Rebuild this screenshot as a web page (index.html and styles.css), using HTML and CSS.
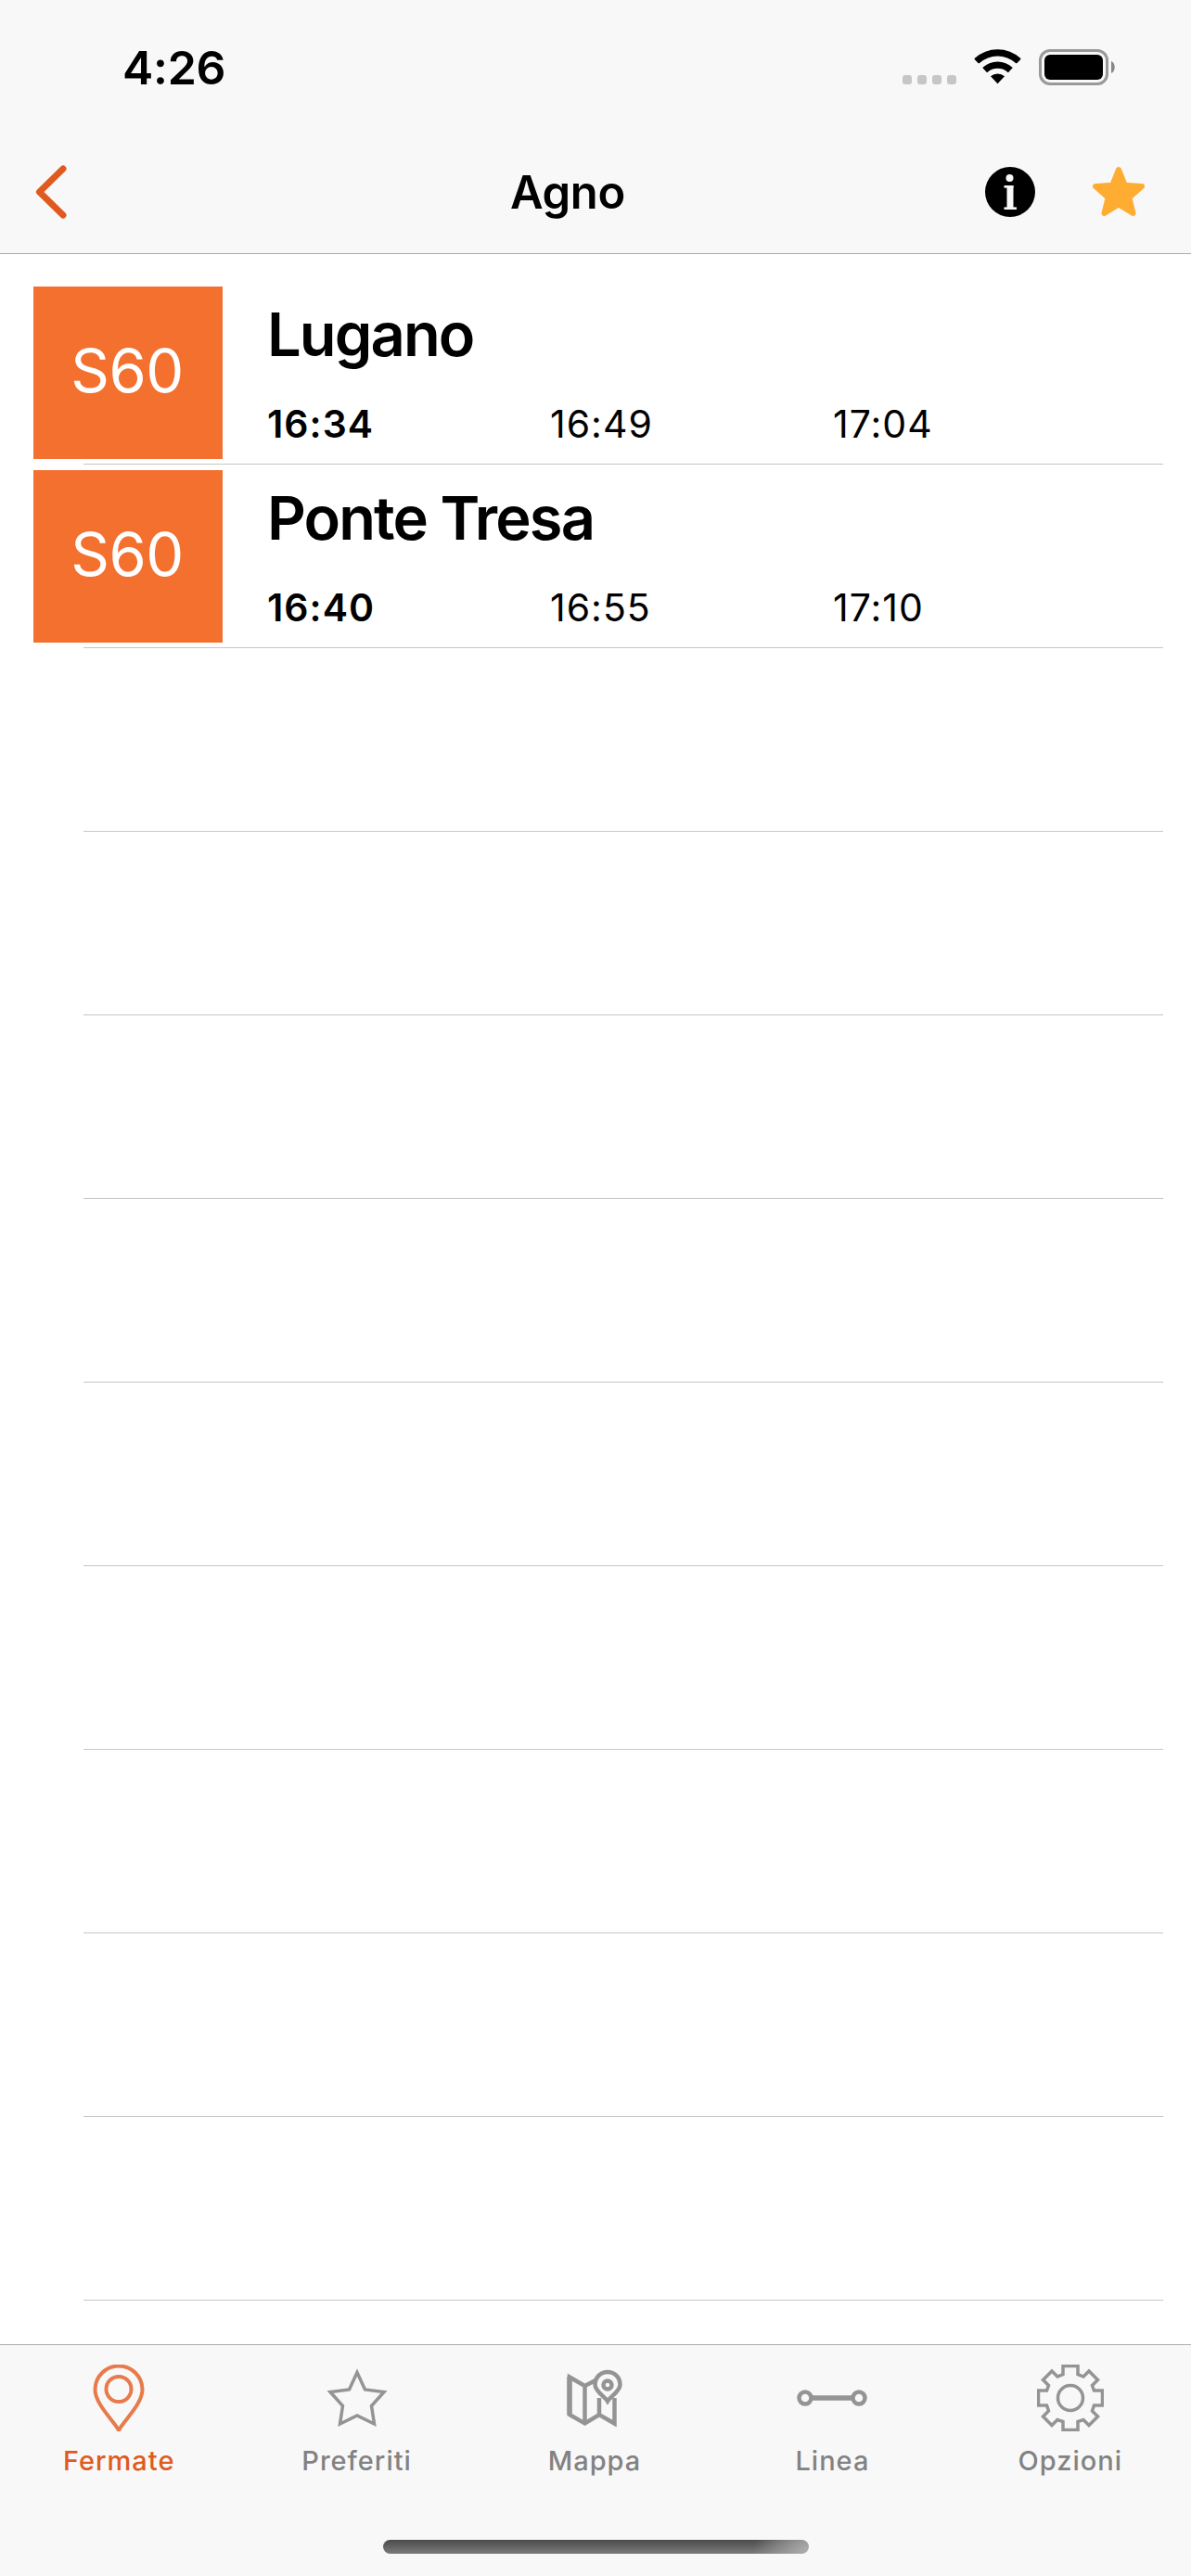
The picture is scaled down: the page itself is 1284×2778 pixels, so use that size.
FILE: index.html
```html
<!DOCTYPE html>
<html lang="it">
  <head>
    <meta charset="UTF-8">
    <meta name="viewport" content="width=device-width, initial-scale=1.0">
    <title>Agno</title>
    <link rel="stylesheet" href="styles.css">
  </head>
  <body>
    <header class="header">
      <div class="status-bar">
        <span class="clock">4:26</span>
        <div class="status-icons">
          <div class="signal"><i></i><i></i><i></i><i></i></div>
          <svg class="wifi" width="52" height="39" viewBox="0 0 52 39">
            <path d="M0.9 11.2 Q0.2 10.500 0.9 9.800 A36.500 36.500 0 0 1 50.100 9.800 Q50.800 10.500 50.100 11.200 L46.500 15 Q45.700 15.700 45 15 A29 29 0 0 0 6 15 Q5.300 15.700 4.500 15 Z" />
            <path d="M9.200 20 A24 24 0 0 1 41.800 20 L36.900 25.200 A17 17 0 0 0 14.100 25.200 Z" />
            <path d="M18 29.200 A11.500 11.500 0 0 1 33 29.200 L25.500 37.300 Z" />
          </svg>
          <svg class="battery" width="83" height="39" viewBox="0 0 83 39">
            <rect x="1.5" y="1.5" width="72" height="36" rx="10.5" fill="none" stroke="#999" stroke-width="3" />
            <rect x="6" y="6" width="63" height="27" rx="6" />
            <path d="M78 13 C83 15 83 24 78 26 Z" fill="#888" />
          </svg>
        </div>
      </div>

      <nav class="nav-bar">
        <svg class="back" width="34" height="58" viewBox="0 0 34 58">
          <path d="M30 4 L4.5 29 L30 54" />
        </svg>
        <h1 class="page-title">Agno</h1>
        <div class="nav-actions">
          <svg width="54" height="54" viewBox="0 0 54 54">
            <circle cx="27" cy="27" r="27" />
            <g fill="#f8f8f8">
              <circle cx="26.5" cy="12" r="4" />
              <rect x="20.5" y="20" width="10" height="2.6" />
              <rect x="23.5" y="20" width="7" height="25" />
              <rect x="20.5" y="43.4" width="13.5" height="2.6" />
            </g>
          </svg>
          <svg width="58" height="56" viewBox="0 0 58 56">
            <path class="star-full" d="M29 4 L35.8 20.8 L54 22 L40.3 34 L44.5 51 L29 41.5 L13.5 51 L17.7 34 L4 22 L22.2 20.8 Z" />
          </svg>
        </div>
      </nav>
    </header>

    <main class="stops">
      <div class="stop">
        <div class="line-badge">S60</div>
        <div class="stop-info">
          <h2>Lugano</h2>
          <div class="times">
            <b>16:34</b>
            <span>16:49</span>
            <span>17:04</span>
          </div>
        </div>
      </div>
      <div class="stop">
        <div class="line-badge">S60</div>
        <div class="stop-info">
          <h2>Ponte Tresa</h2>
          <div class="times">
            <b>16:40</b>
            <span>16:55</span>
            <span>17:10</span>
          </div>
        </div>
      </div>
      <!-- empty rows -->
      <div class="stop"></div>
      <div class="stop"></div>
      <div class="stop"></div>
      <div class="stop"></div>
      <div class="stop"></div>
      <div class="stop"></div>
      <div class="stop"></div>
      <div class="stop"></div>
      <div class="stop"></div>
    </main>

    <footer class="tab-bar">
      <div class="tabs">
        <div class="tab active">
          <svg width="72" height="72" viewBox="0 0 72 72">
            <path d="M36 71 C32 62 10.500 43 10.500 27 A25.500 25.500 0 0 1 61.500 27 C61.500 43 40 62 36 71 Z" />
            <circle cx="36" cy="26.5" r="13.5" />
          </svg>
          <span>Fermate</span>
        </div>
        <div class="tab">
          <svg width="72" height="72" viewBox="0 0 72 72">
            <path d="M36 8.500 L44.500 27 L65 29.500 L51.500 44.500 L54.500 64 L36 55 L17.500 64 L20.500 44.500 L7 29.500 L27.500 27 Z" />
          </svg>
          <span>Preferiti</span>
        </div>
        <div class="tab">
          <svg width="72" height="72" viewBox="0 0 72 72" class="map">
            <path d="M37 17 L25.500 23 L9 13.500 V54 L25.500 63.500 L41 54 L57.500 63.500 V36 M25.500 23 V63.500 M41 36 V54" />
            <path d="M9 13 V54.500" stroke-width="5.500" />
            <path d="M50 39.500 C47 34.500 36.500 29 36.500 21.500 A13.500 13.500 0 0 1 63.500 21.500 C63.500 29 53 34.500 50 39.500 Z" />
            <circle cx="50" cy="22" r="4.500" />
          </svg>
          <span>Mappa</span>
        </div>
        <div class="tab">
          <svg width="78" height="72" viewBox="0 0 78 72" class="line">
            <circle cx="10" cy="36" r="6.500" />
            <circle cx="68" cy="36" r="6.500" />
            <path d="M16.500 36 H61.500" stroke-width="5.500" />
          </svg>
          <span>Linea</span>
        </div>
        <div class="tab">
          <svg width="72" height="72" viewBox="0 0 72 72">
            <path d="M28 1.500 H44 V10.500 L50 13 L56 7 L65.500 16.500 L59.500 22.500 L61.500 28 H70.500 V44 H61.500 L59.500 50 L65.500 56 L56 65.500 L50 59.500 L44 61.500 V70.500 H28 V61.500 L22 59.500 L16 65.500 L6.500 56 L12.500 50 L10.500 44 H1.500 V28 H10.500 L12.500 22.500 L6.500 16.500 L16 7 L22 13 L28 10.500 Z" />
            <circle cx="36" cy="36" r="13.500" />
          </svg>
          <span>Opzioni</span>
        </div>
      </div>
      <div class="home-indicator"></div>
    </footer>
  </body>
</html>
```

FILE: styles.css
```css
* {
  box-sizing: border-box;
}

body {
  margin: 0;
  height: 2778px;
  display: flex;
  flex-direction: column;
  background-color: white;
  color: black;
  font-family: Inter, "Liberation Sans", sans-serif;
}

h1, h2 {
  margin: 0;
  font-weight: 600;
}

svg {
  display: block;
}

/* top of the page */

.header {
  height: 274px;
  background-color: #f8f8f8;
  border-bottom: 1px solid #adadad;
}

.status-bar {
  height: 145px;
  padding: 0 81px 0 132px;
  display: flex;
  justify-content: space-between;
  align-items: center;
}

.clock {
  font-size: 50px;
  font-weight: 600;
  letter-spacing: -0.3px;
}

.status-icons {
  display: flex;
  align-items: flex-end;
}

.signal {
  display: flex;
  gap: 6px;
  padding-bottom: 1px;
  margin-right: 19px;
}

.signal i {
  width: 10px;
  height: 10px;
  border-radius: 3px;
  background-color: #c6c6c6;
}

.wifi {
  margin-right: 18px;
}

.nav-bar {
  height: 124px;
  padding: 0 49px 0 38px;
  display: grid;
  grid-template-columns: 234px 1fr 234px;
  align-items: center;
}

.back {
  fill: none;
  stroke: #e05a20;
  stroke-width: 7;
  stroke-linecap: round;
  stroke-linejoin: round;
}

.page-title {
  padding-right: 49px;
  text-align: center;
  font-size: 49px;
  letter-spacing: -0.3px;
}

.nav-actions {
  display: flex;
  align-items: center;
  justify-content: flex-end;
  gap: 61px;
}

.star-full {
  fill: #ffac33;
  stroke: #ffac33;
  stroke-width: 6;
  stroke-linejoin: round;
}

/* departures */

.stops {
  padding-top: 29px;
  flex: 1;
}

.stop {
  height: 198px;
  padding: 6px 0 0 36px;
  display: flex;
  background: linear-gradient(#c6c6c8, #c6c6c8) 90px 197px / 1164px 1px no-repeat;
}

.line-badge {
  width: 204px;
  height: 186px;
  display: flex;
  align-items: center;
  justify-content: center;
  padding: 0 2px 5px 0;
  background-color: #f4702f;
  color: white;
  font-size: 65px;
  letter-spacing: -0.5px;
}

.stop-info {
  padding: 13px 0 0 48px;
}

.stop-info h2 {
  font-size: 65px;
  line-height: 78px;
  letter-spacing: -1.9px;
}

.times {
  display: grid;
  grid-template-columns: 305px 305px 305px;
  margin-top: 32px;
  font-size: 41px;
  line-height: 50px;
  letter-spacing: 1px;
}

.times b {
  font-weight: 600;
}

/* bottom of the page */

.tab-bar {
  height: 250px;
  background-color: #f8f8f8;
  border-top: 1px solid #adadad;
}

.tabs {
  width: 1282px;
  display: flex;
  padding-top: 21px;
}

.tab {
  flex: 1;
  display: flex;
  flex-direction: column;
  align-items: center;
  color: #828282;
  font-size: 29px;
  font-weight: 500;
  letter-spacing: 1px;
}

.tab span {
  margin-top: 14px;
  line-height: 36px;
}

.tab svg {
  fill: none;
  stroke: #949494;
  stroke-width: 3.5;
}

.tab .map,
.tab .line {
  stroke-width: 4.5;
}

.tab.active {
  color: #e05a20;
}

.tab.active svg {
  stroke: #e77b4b;
  stroke-width: 4;
}

.home-indicator {
  width: 459px;
  height: 15px;
  margin: 67px 0 0 413px;
  border-radius: 8px;
  background: radial-gradient(circle at 100% 100%, #b0b0b0, transparent 60px), linear-gradient(#4b4b4b, #7b7b7b);
}
```
